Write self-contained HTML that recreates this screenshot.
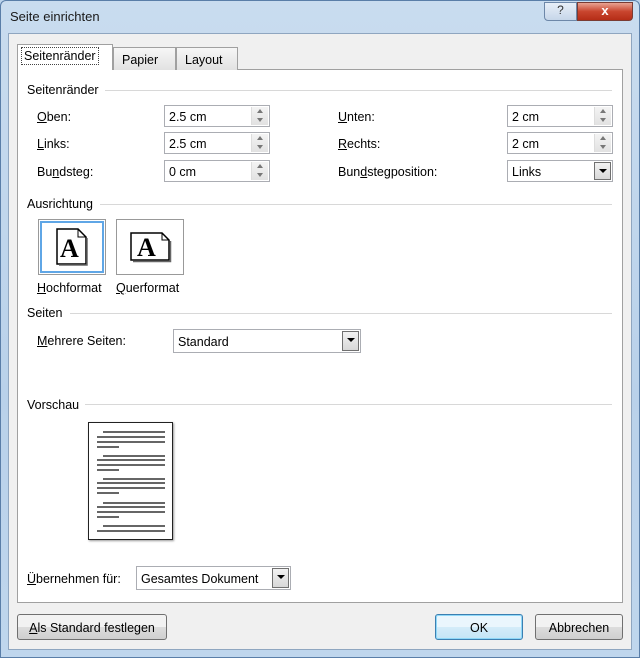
<!DOCTYPE html>
<html><head><style>
*{box-sizing:border-box;margin:0;padding:0}
body{width:640px;height:658px;overflow:hidden;font-family:"Liberation Sans",sans-serif;font-size:12.5px;color:#000;background:#bcd4ec}
.frame{position:absolute;left:0;top:0;width:640px;height:658px;background:linear-gradient(180deg,#c9dcef,#b9d1ea 60%,#bfd6ed);border:1px solid #5a7ea8;border-radius:6px 6px 0 0}
.title{position:absolute;left:10px;top:9px;font-size:13px;color:#1a1a1a}
.body{position:absolute;left:8px;top:33px;width:624px;height:617px;background:#f0f0f0;border:1px solid #8fa6c0}
.a{position:absolute}
.panel{left:17px;top:69px;width:606px;height:534px;background:#fff;border:1px solid #a0a0a0}
.tab{position:absolute;top:47px;height:23px;border:1px solid #a0a0a0;border-bottom:none;background:linear-gradient(#f6f6f6,#e2e2e2);padding:5px 8px 0;}
.sec{position:absolute;left:27px}
.line{position:absolute;height:1px;background:#d8d8d8}
.in{position:absolute;height:22px;border:1px solid #abadb3;background:#fff;padding:4px 4px}
.spin{position:absolute;right:1px;top:1px;width:17px;height:18px;background:linear-gradient(#f4f4f4,#e2e2e2);border-left:1px solid #ddd}
.spin:before{content:"";position:absolute;left:5px;top:2px;border:3px solid transparent;border-bottom:4px solid #777;border-top:none}
.spin:after{content:"";position:absolute;left:5px;top:11px;border:3px solid transparent;border-top:4px solid #777;border-bottom:none}
.dd{position:absolute;right:1px;top:1px;width:17px;height:18px;background:linear-gradient(#f2f2f2,#d8d8d8);border:1px solid #707070}
.dd:after{content:"";position:absolute;left:4px;top:6px;border:4px solid transparent;border-top:4px solid #000;border-bottom:none}
.btn{position:absolute;height:26px;border:1px solid #707070;border-radius:3px;background:linear-gradient(#f2f2f2 50%,#dddddd 50%,#cfcfcf);text-align:center;padding-top:6px}
u{text-decoration:underline}
</style></head><body>
<div class="frame"></div>
<div class="title">Seite einrichten</div>
<div class="a" style="left:544px;top:2px;width:33px;height:19px;border:1px solid #6d87a8;border-radius:0 0 0 4px;background:linear-gradient(#e8eff8,#c6d6e9);text-align:center;font-size:12px;color:#333">?</div>
<div class="a" style="left:577px;top:2px;width:56px;height:19px;border:1px solid #7a3b33;border-radius:0 0 4px 0;background:linear-gradient(#e8a393,#c9452e 50%,#b52d17);text-align:center;color:#fff;font-weight:bold;font-size:13px">x</div>
<div class="body"></div>
<div class="a panel"></div>
<div class="tab" style="left:113px;width:63px">Papier</div>
<div class="tab" style="left:176px;width:62px">Layout</div>
<div class="tab" style="left:17px;top:44px;height:26px;width:96px;background:#fff;border-bottom:none;padding:4px 3px 0"><span style="border:1px dotted #444;padding:1px 2px">Seitenränder</span></div>

<div class="sec" style="top:83px">Seitenränder</div><div class="line" style="left:105px;top:90px;width:507px"></div>
<div class="a" style="left:37px;top:110px"><u>O</u>ben:</div>
<div class="a" style="left:37px;top:137px"><u>L</u>inks:</div>
<div class="a" style="left:37px;top:165px">Bu<u>n</u>dsteg:</div>
<div class="in" style="left:164px;top:105px;width:106px">2.5 cm<div class="spin"></div></div>
<div class="in" style="left:164px;top:132px;width:106px">2.5 cm<div class="spin"></div></div>
<div class="in" style="left:164px;top:160px;width:106px">0 cm<div class="spin"></div></div>
<div class="a" style="left:338px;top:110px"><u>U</u>nten:</div>
<div class="a" style="left:338px;top:137px"><u>R</u>echts:</div>
<div class="a" style="left:338px;top:165px">Bun<u>d</u>stegposition:</div>
<div class="in" style="left:507px;top:105px;width:106px">2 cm<div class="spin"></div></div>
<div class="in" style="left:507px;top:132px;width:106px">2 cm<div class="spin"></div></div>
<div class="in" style="left:507px;top:160px;width:106px">Links<div class="dd"></div></div>

<div class="sec" style="top:197px">Ausrichtung</div><div class="line" style="left:100px;top:204px;width:512px"></div>
<div class="a" style="left:38px;top:219px;width:68px;height:56px;border:1px solid #999;padding:1px"><div style="width:100%;height:100%;border:2px solid #5fa6e6"></div></div>
<div class="a" style="left:116px;top:219px;width:68px;height:56px;border:1px solid #999"></div>
<svg class="a" style="left:56px;top:228px" width="32" height="38"><path d="M1 1H22L30 9V36H1Z" fill="#fff" stroke="#000" stroke-width="1.5"/><path d="M22 1V9H30" fill="none" stroke="#000"/><path d="M3 37H31V10" fill="none" stroke="#666" stroke-width="1.5"/><text x="4" y="29" font-family="Liberation Serif" font-weight="bold" font-size="26">A</text></svg>
<svg class="a" style="left:130px;top:232px" width="42" height="31"><path d="M1 1H32L39 8V28H1Z" fill="#fff" stroke="#000" stroke-width="1.5"/><path d="M32 1V8H39" fill="none" stroke="#000"/><path d="M3 29.5H40.5V9" fill="none" stroke="#666" stroke-width="1.5"/><text x="7" y="24" font-family="Liberation Serif" font-weight="bold" font-size="26">A</text></svg>
<div class="a" style="left:37px;top:281px"><u>H</u>ochformat</div>
<div class="a" style="left:116px;top:281px"><u>Q</u>uerformat</div>

<div class="sec" style="top:306px">Seiten</div><div class="line" style="left:70px;top:313px;width:542px"></div>
<div class="a" style="left:37px;top:334px"><u>M</u>ehrere Seiten:</div>
<div class="in" style="left:173px;top:329px;width:188px;height:24px;padding-top:5px">Standard<div class="dd" style="height:20px"></div></div>

<div class="sec" style="top:398px">Vorschau</div><div class="line" style="left:85px;top:404px;width:527px"></div>
<div class="a" style="left:88px;top:422px;width:85px;height:118px;border:1.5px solid #222;background:#fff;box-shadow:1px 1px 2px #999"></div>
<svg class="a" style="left:88px;top:422px" width="85" height="118" stroke="#333" stroke-width="1.5">
<path d="M15 10H77M9 15H77M9 20H77M9 25H31M15 34H77M9 38H77M9 43H77M9 48H31M15 57H77M9 61H77M9 66H77M9 71H31M15 81H77M9 85H77M9 90H77M9 95H31M15 104H77M9 109H77"/></svg>

<div class="a" style="left:27px;top:572px"><u>Ü</u>bernehmen für:</div>
<div class="in" style="left:136px;top:566px;width:155px;height:24px;padding-top:5px">Gesamtes Dokument<div class="dd" style="height:20px"></div></div>

<div class="btn" style="left:17px;top:614px;width:150px"><u>A</u>ls Standard festlegen</div>
<div class="btn" style="left:435px;top:614px;width:88px;border-color:#3c7fb1;box-shadow:inset 0 0 0 1px #8fd8f8;background:linear-gradient(#eaf6fd 50%,#d4ecf9 50%,#c4e5f6)">OK</div>
<div class="btn" style="left:535px;top:614px;width:88px">Abbrechen</div>
</body></html>
